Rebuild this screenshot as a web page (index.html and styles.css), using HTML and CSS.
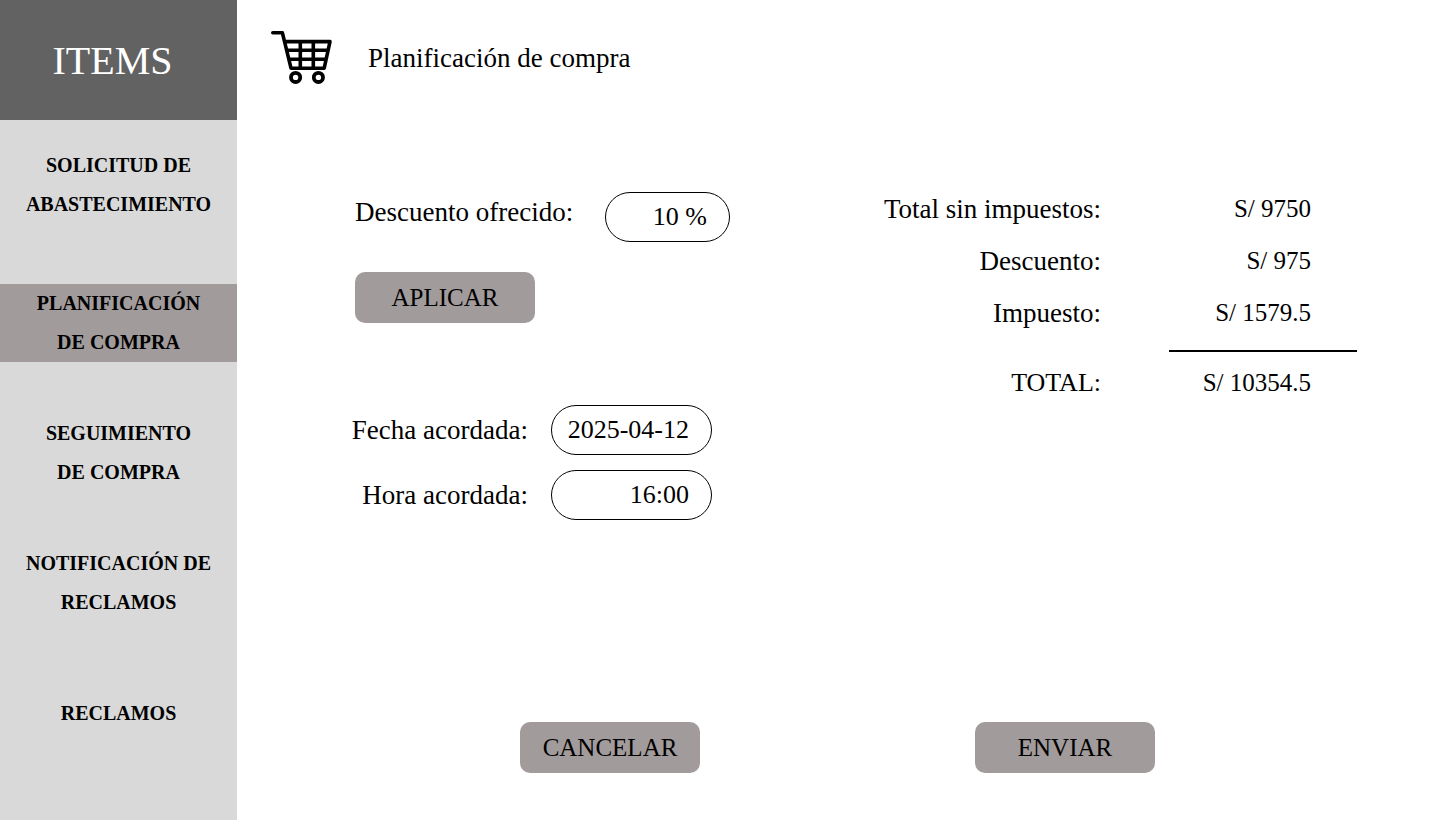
FILE: index.html
```html
<!DOCTYPE html>
<html lang="es">
<head>
<meta charset="utf-8">
<title>Planificación de compra</title>
<link rel="stylesheet" href="styles.css">
</head>
<body>
<div class="app">
  <aside class="sidebar">
    <div class="brand">ITEMS</div>
    <nav class="nav">
      <a class="nav-link" href="#solicitud">SOLICITUD DE<br>ABASTECIMIENTO</a>
      <a class="nav-link nav-link-active" href="#planificacion" aria-current="page">PLANIFICACIÓN<br>DE COMPRA</a>
      <a class="nav-link" href="#seguimiento">SEGUIMIENTO<br>DE COMPRA</a>
      <a class="nav-link" href="#notificacion">NOTIFICACIÓN DE<br>RECLAMOS</a>
      <a class="nav-link nav-link-last" href="#reclamos">RECLAMOS</a>
    </nav>
  </aside>
  <main class="main">
    <header class="header">
      <svg class="cart" viewBox="0 0 62 56" width="62" height="56" fill="none" stroke="#000" aria-hidden="true">
        <path d="M1.800 2.800H11.400L20 38.200H53.200L59 11.600H14" stroke-width="3.600" stroke-linecap="round" stroke-linejoin="round"/>
        <path d="M16 20.300H57M18 29.300H55M29.300 12V38M42.300 12V38" stroke-width="3.600"/>
        <circle cx="24.600" cy="47.400" r="4.600" stroke-width="3.800"/>
        <circle cx="47.400" cy="47.400" r="4.600" stroke-width="3.800"/>
      </svg>
      <h1 class="title">Planificación de compra</h1>
    </header>
    <div class="content">
      <form class="form" id="plan">
        <div class="discount">
          <label class="label" for="descuento">Descuento ofrecido:</label>
          <input class="field field-short" id="descuento" type="text" value="10 %">
        </div>
        <button class="button button-apply" type="button">APLICAR</button>
        <div class="schedule">
          <label class="label" for="fecha">Fecha acordada:</label>
          <input class="field" id="fecha" type="text" value="2025-04-12">
          <label class="label" for="hora">Hora acordada:</label>
          <input class="field" id="hora" type="text" value="16:00">
        </div>
      </form>
      <table class="summary">
        <tbody>
          <tr><th scope="row">Total sin impuestos:</th><td>S/ 9750</td></tr>
          <tr><th scope="row">Descuento:</th><td>S/ 975</td></tr>
          <tr class="row-tax"><th scope="row">Impuesto:</th><td>S/ 1579.5</td></tr>
          <tr class="row-total"><th scope="row">TOTAL:</th><td>S/ 10354.5</td></tr>
        </tbody>
      </table>
    </div>
    <footer class="actions">
      <button class="button" type="button">CANCELAR</button>
      <button class="button" type="submit" form="plan">ENVIAR</button>
    </footer>
  </main>
</div>
</body>
</html>
```
FILE: styles.css
```css
* { box-sizing: border-box; }

body {
  margin: 0;
  background: #fff;
  color: #000;
  font-family: "Liberation Serif", "Times New Roman", serif;
  font-size: 27px;
}

.app {
  display: flex;
  min-height: 100vh;
}

.sidebar {
  flex: 0 0 237px;
  background: #d9d9d9;
}

.brand {
  display: flex;
  align-items: center;
  justify-content: center;
  height: 120px;
  padding-right: 12px;
  background: #626262;
  color: #fff;
  font-size: 40px;
}

.nav {
  display: flex;
  flex-direction: column;
  gap: 52px;
  padding-top: 26px;
}

.nav-link {
  color: #000;
  font-size: 20px;
  font-weight: 700;
  line-height: 39px;
  text-align: center;
  text-decoration: none;
}

.nav-link-active {
  margin-top: 8px;
  background: #a29b9b;
}

.nav-link-last { margin-top: 20px; }

.main {
  display: flex;
  flex: 1;
  flex-direction: column;
}

.header {
  display: flex;
  align-items: center;
  gap: 35px;
  height: 116px;
  padding-left: 34px;
}

.title {
  margin: 0;
  font-size: 27px;
  font-weight: 400;
}

.content {
  display: flex;
  flex: 1;
  align-items: flex-start;
  justify-content: space-between;
  padding: 67px 83px 0 113px;
}

.form { padding-top: 9px; }

.discount {
  display: flex;
  gap: 28px;
  padding-left: 5px;
}

.discount .label {
  min-width: 222px;
  line-height: 40px;
}

.field {
  width: 161px;
  height: 50px;
  padding: 0 22px 0 8px;
  border: 1px solid #000;
  border-radius: 25px;
  background: #fff;
  color: #000;
  font: inherit;
  font-size: 26px;
  text-align: right;
}

.field-short { width: 125px; }

.button {
  width: 180px;
  height: 51px;
  padding: 0;
  border: 0;
  border-radius: 10px;
  background: #a29b9b;
  color: #000;
  font: inherit;
  font-size: 25px;
}

.button-apply {
  display: block;
  margin: 30px 0 82px 5px;
}

.schedule {
  display: grid;
  grid-template-columns: minmax(178px, auto) 161px;
  gap: 15px 23px;
  align-items: center;
  justify-content: start;
}

.schedule .label { text-align: right; }

.summary {
  width: 478px;
  border-collapse: separate;
  border-spacing: 0;
}

.summary th,
.summary td {
  height: 52px;
  padding: 0;
  text-align: right;
  font-weight: 400;
  white-space: nowrap;
}

.summary th { padding-right: 68px; }

.summary td {
  width: 188px;
  padding-right: 46px;
  font-size: 25px;
}

.summary .row-tax th,
.summary .row-tax td {
  height: 63px;
  padding-bottom: 11px;
}

.summary .row-total th,
.summary .row-total td {
  height: 64px;
  border-top: 2px solid transparent;
}

.summary .row-total th { font-size: 26px; }

.summary .row-total td { border-top-color: #000; }

.actions {
  display: flex;
  justify-content: center;
  gap: 275px;
  padding: 40px 2px 47px 0;
}
```
